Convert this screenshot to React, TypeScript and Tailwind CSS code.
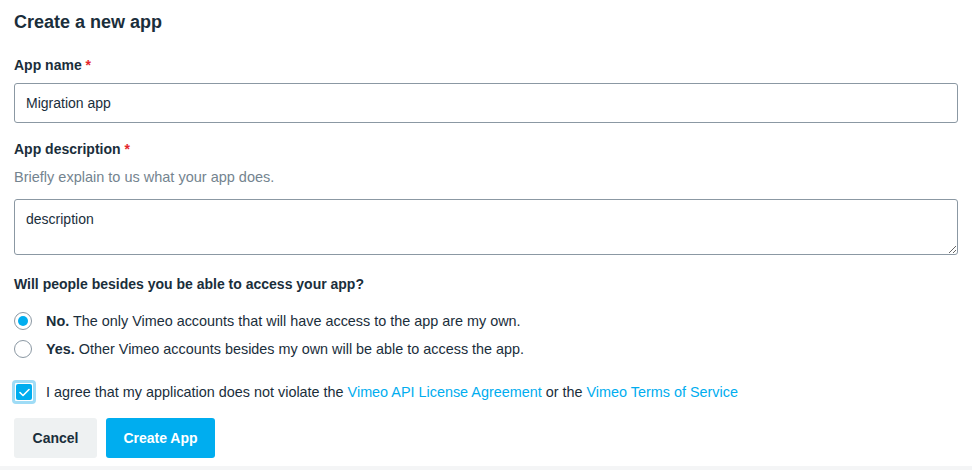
import { useState } from 'react';

export default function App() {
  const [access, setAccess] = useState<'no' | 'yes'>('no');
  const [agree, setAgree] = useState(true);

  return (
    <div className="w-[972px] h-[470px] bg-white text-[#1a2e3b] font-['Liberation_Sans',Arial,sans-serif] flex flex-col">
      <div className="px-[14px] pt-[10px] flex-1">
        <h1 className="text-[18px] font-bold leading-[24px]">Create a new app</h1>

        <label className="block mt-[22px] text-[14px] font-bold leading-[18px]">
          App name <span className="text-[#e4262c]">*</span>
        </label>
        <input
          defaultValue="Migration app"
          className="mt-[9px] w-[944px] h-[40px] border border-[#8b98a3] rounded-[3px] px-[11px] text-[14px] text-[#1a2e3b] outline-none"
        />

        <label className="block mt-[17px] text-[14px] font-bold leading-[18px]">
          App description <span className="text-[#e4262c]">*</span>
        </label>
        <div className="mt-[10px] text-[14.5px] leading-[18px] text-[#74848f]">Briefly explain to us what your app does.</div>
        <textarea
          defaultValue="description"
          className="block mt-[13px] w-[944px] h-[56px] border border-[#8b98a3] rounded-[3px] px-[11px] pt-[10px] text-[14px] leading-[18px] text-[#1a2e3b] outline-none"
        />

        <div className="mt-[20px] text-[14px] font-bold leading-[18px]">Will people besides you be able to access your app?</div>

        <div className="mt-[19px] flex flex-col gap-[10px]">
          {[
            { k: 'no' as const, b: 'No.', t: 'The only Vimeo accounts that will have access to the app are my own.' },
            { k: 'yes' as const, b: 'Yes.', t: 'Other Vimeo accounts besides my own will be able to access the app.' },
          ].map(o => (
            <label key={o.k} className="flex items-center gap-[14px] cursor-pointer text-[14.4px] leading-[18px]" onClick={() => setAccess(o.k)}>
              <span className="w-[18px] h-[18px] rounded-full border border-[#8b98a3] flex items-center justify-center bg-white">
                {access === o.k && <span className="w-[10px] h-[10px] rounded-full bg-[#00adef]" />}
              </span>
              <span><b>{o.b}</b> {o.t}</span>
            </label>
          ))}
        </div>

        <label className="mt-[22px] -ml-[2px] flex items-center gap-[10px] text-[14.4px] leading-[18px] cursor-pointer" onClick={() => setAgree(!agree)}>
          <span className="w-[24px] h-[24px] rounded-[4px] border-[3px] border-[#9fdcf6] flex items-center justify-center">
            <span className={`w-[16px] h-[16px] rounded-[2px] flex items-center justify-center ${agree ? 'bg-[#00adef]' : 'bg-white border border-[#8b98a3]'}`}>
              {agree && (
                <svg width="11" height="9" viewBox="0 0 11 9" fill="none">
                  <path d="M1 4.5L4 7.5L10 1.5" stroke="white" strokeWidth="1.6" strokeLinecap="round" strokeLinejoin="round" />
                </svg>
              )}
            </span>
          </span>
          <span>
            I agree that my application does not violate the <a href="#" className="text-[#00adef]">Vimeo API License Agreement</a> or the <a href="#" className="text-[#00adef]">Vimeo Terms of Service</a>
          </span>
        </label>

        <div className="mt-[14px] flex gap-[9px]">
          <button className="h-[40px] w-[83px] rounded-[3px] bg-[#eef1f2] text-[14px] font-bold text-[#1a2e3b]">Cancel</button>
          <button className="h-[40px] w-[109px] rounded-[3px] bg-[#00adef] text-[14px] font-bold text-white">Create App</button>
        </div>
      </div>
      <div className="h-[4px] bg-[#f4f5f6]" />
    </div>
  );
}
